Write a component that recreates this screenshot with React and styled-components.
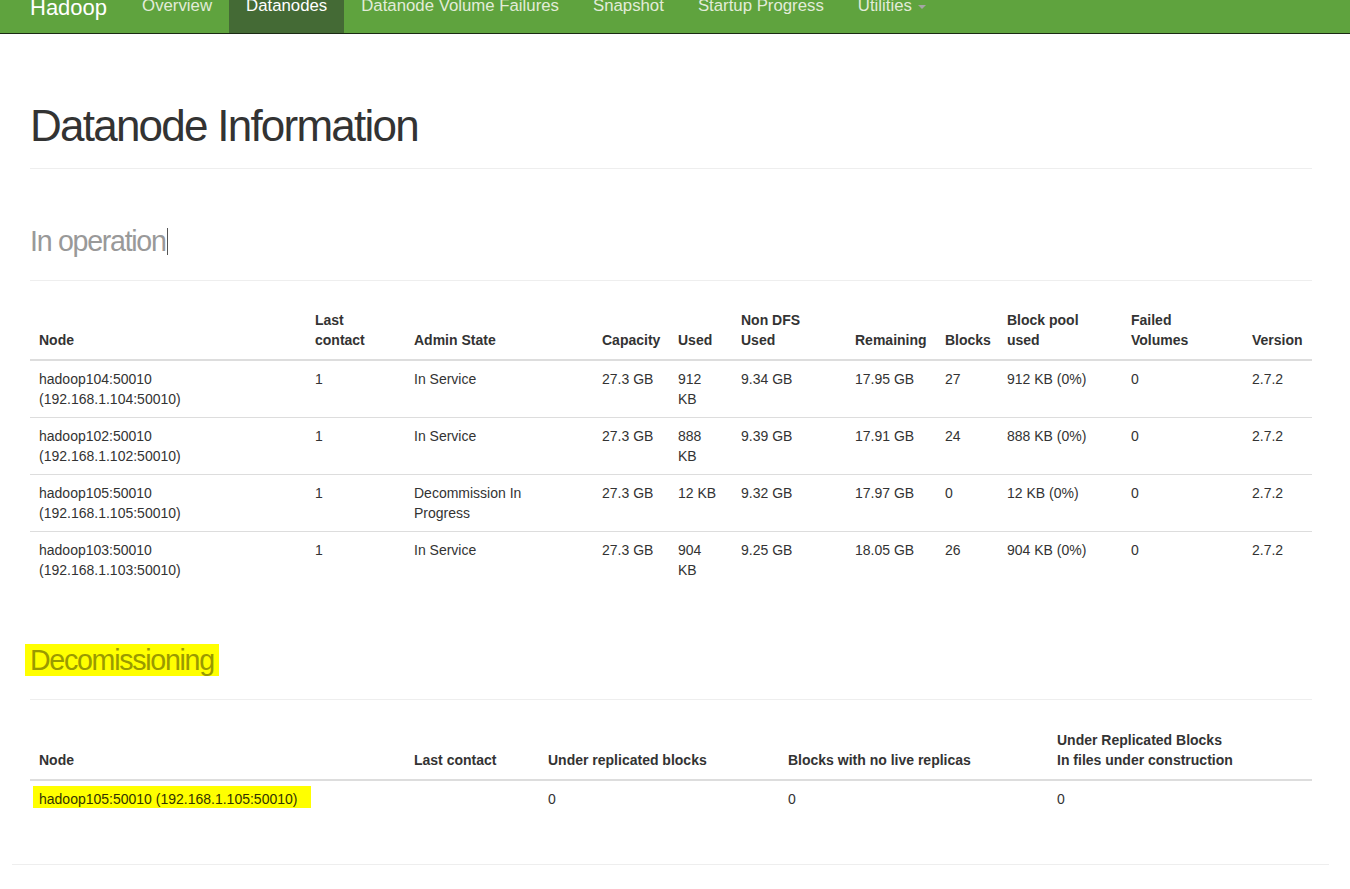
import React from 'react'
import styled, { createGlobalStyle } from 'styled-components';

const GlobalStyle = createGlobalStyle`
    body {
        margin: 0;
        font-family: "Liberation Sans", Arial, sans-serif;
        font-size: 14px;
        line-height: 20px;
        color: #333;
        background: #fff;
    }
`

const Navbar = styled.nav`
    display: flex;
    height: 33px;
    background: #5fa33e;
    border-bottom: 1px solid #1b2a14;
    overflow: hidden;
`

const Brand = styled.a`
    padding: 0 18px 0 30px;
    font-size: 22px;
    line-height: 15px;
    color: #fff;
`

const NavLink = styled.a`
    display: block;
    padding: 0 17px;
    font-size: 16.8px;
    line-height: 12px;
    color: ${p => (p.$active ? '#fff' : '#e2ecd9')};
    background: ${p => (p.$active ? '#446a35' : 'transparent')};
`

const Caret = styled.span`
    display: inline-block;
    width: 0;
    height: 0;
    margin-left: 6px;
    vertical-align: 2px;
    border-top: 4px solid #a5a5a5;
    border-left: 4px solid transparent;
    border-right: 4px solid transparent;
`

const Main = styled.main`
    padding: 0 38px 0 30px;
`

const PageHeader = styled.div`
    margin-top: ${p => p.$top}px;
    padding-bottom: ${p => p.$bottom}px;
    border-bottom: 1px solid #eee;
`

const Title = styled.h1`
    margin: 0;
    font-size: 44px;
    line-height: 48px;
    font-weight: 400;
    letter-spacing: -0.04em;
    color: #333;
`

const Small = styled.span`
    font-size: 28.6px;
    line-height: 1;
    letter-spacing: -0.045em;
    color: #999;
`

const Cursor = styled.span`
    display: inline-block;
    width: 1px;
    height: 27px;
    margin-left: 1px;
    vertical-align: -4px;
    background: #555;
`

const Mark = styled.span`
    background: #ffff00;
    color: ${p => (p.$dark ? '#333300' : '#9a9a00')};
    padding: ${p => (p.$dark ? '5px 14px 1px 6px' : '0 5px')};
    margin-left: ${p => (p.$dark ? '-6px' : '-5px')};
`

const Table = styled.table`
    width: 100%;
    table-layout: fixed;
    border-collapse: collapse;
    border-spacing: 0;
    margin-top: ${p => p.$top}px;

    th {
        padding: 7px 8px 9px 9px;
        text-align: left;
        vertical-align: bottom;
        font-weight: 700;
        border-bottom: 2px solid #ddd;
    }
    td {
        padding: 8px 8px 8px 9px;
        vertical-align: top;
        border-top: 1px solid #ddd;
    }
    tbody tr:first-child td {
        border-top: 0;
    }
`

const Wrap = styled.span`
    display: block;
    max-width: ${p => p.$max}px;
`

const BottomRule = styled.hr`
    margin: 47px 21px 0 12px;
    border: 0;
    border-top: 1px solid #eee;
`

const navItems = ['Overview', 'Datanodes', 'Datanode Volume Failures', 'Snapshot', 'Startup Progress'];

const nodes = [
    { name: 'hadoop104:50010', addr: '192.168.1.104:50010', state: 'In Service', cap: '27.3 GB', used: '912 KB', nonDfs: '9.34 GB', rem: '17.95 GB', blocks: '27', pool: '912 KB (0%)' },
    { name: 'hadoop102:50010', addr: '192.168.1.102:50010', state: 'In Service', cap: '27.3 GB', used: '888 KB', nonDfs: '9.39 GB', rem: '17.91 GB', blocks: '24', pool: '888 KB (0%)' },
    { name: 'hadoop105:50010', addr: '192.168.1.105:50010', state: 'Decommission In Progress', cap: '27.3 GB', used: '12 KB', nonDfs: '9.32 GB', rem: '17.97 GB', blocks: '0', pool: '12 KB (0%)' },
    { name: 'hadoop103:50010', addr: '192.168.1.103:50010', state: 'In Service', cap: '27.3 GB', used: '904 KB', nonDfs: '9.25 GB', rem: '18.05 GB', blocks: '26', pool: '904 KB (0%)' },
];

const opCols = [276, 99, 188, 76, 63, 114, 90, 62, 124, 121, 69];
const decomCols = [375, 134, 240, 269, 264];

const App = () => {
    return (
        <>
            <GlobalStyle />
            <Navbar>
                <Brand>Hadoop</Brand>
                {navItems.map(item => (
                    <NavLink key={item} $active={item === 'Datanodes'}>{item}</NavLink>
                ))}
                <NavLink>Utilities<Caret /></NavLink>
            </Navbar>
            <Main>
                <PageHeader $top={68} $bottom={18}>
                    <Title>Datanode Information</Title>
                </PageHeader>
                <PageHeader $top={43} $bottom={20}>
                    <Title><Small>In operation</Small><Cursor /></Title>
                </PageHeader>
                <Table $top={22}>
                    <colgroup>
                        {opCols.map((w, i) => <col key={i} style={{ width: w }} />)}
                    </colgroup>
                    <thead>
                        <tr>
                            <th>Node</th>
                            <th>Last<br />contact</th>
                            <th>Admin State</th>
                            <th>Capacity</th>
                            <th>Used</th>
                            <th>Non DFS<br />Used</th>
                            <th>Remaining</th>
                            <th>Blocks</th>
                            <th>Block pool<br />used</th>
                            <th>Failed<br />Volumes</th>
                            <th>Version</th>
                        </tr>
                    </thead>
                    <tbody>
                        {nodes.map(n => (
                            <tr key={n.name}>
                                <td><Wrap $max={200}>{n.name} ({n.addr})</Wrap></td>
                                <td>1</td>
                                <td><Wrap $max={150}>{n.state}</Wrap></td>
                                <td>{n.cap}</td>
                                <td><Wrap $max={40}>{n.used}</Wrap></td>
                                <td>{n.nonDfs}</td>
                                <td>{n.rem}</td>
                                <td>{n.blocks}</td>
                                <td>{n.pool}</td>
                                <td>0</td>
                                <td>2.7.2</td>
                            </tr>
                        ))}
                    </tbody>
                </Table>
                <PageHeader $top={43} $bottom={20}>
                    <Title><Small><Mark>Decomissioning</Mark></Small></Title>
                </PageHeader>
                <Table $top={23}>
                    <colgroup>
                        {decomCols.map((w, i) => <col key={i} style={{ width: w }} />)}
                    </colgroup>
                    <thead>
                        <tr>
                            <th>Node</th>
                            <th>Last contact</th>
                            <th>Under replicated blocks</th>
                            <th>Blocks with no live replicas</th>
                            <th>Under Replicated Blocks<br />In files under construction</th>
                        </tr>
                    </thead>
                    <tbody>
                        <tr>
                            <td><Mark $dark>hadoop105:50010 (192.168.1.105:50010)</Mark></td>
                            <td></td>
                            <td>0</td>
                            <td>0</td>
                            <td>0</td>
                        </tr>
                    </tbody>
                </Table>
            </Main>
            <BottomRule />
        </>
    )
}

export default App
